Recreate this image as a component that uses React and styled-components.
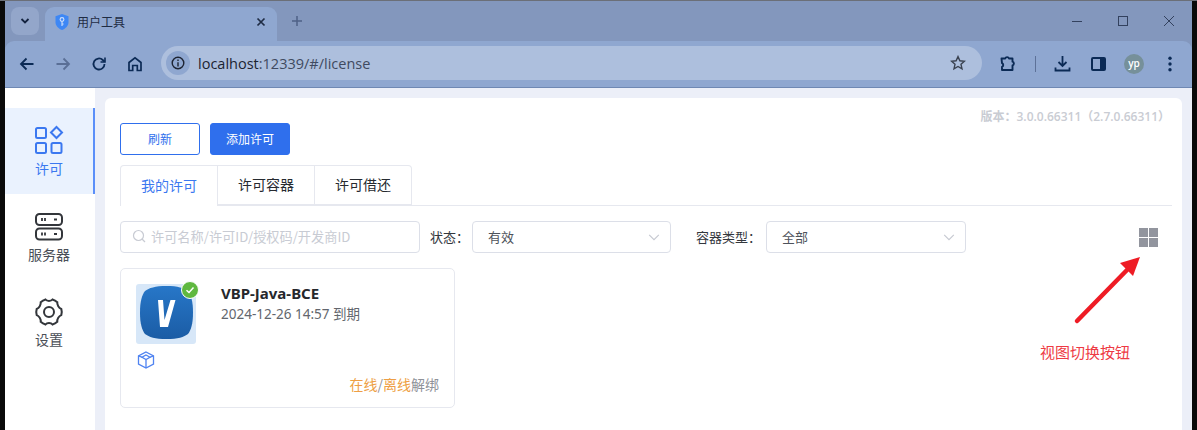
import React from "react";
import styled, { createGlobalStyle } from "styled-components";

const Global = createGlobalStyle`
  html, body { margin: 0; padding: 0; background: #000; }
  * { box-sizing: border-box; }
  body { font-family: "Open Sans", "Noto Sans CJK SC", sans-serif; }
`;

const Frame = styled.div`
  width: 1197px; height: 430px; overflow: hidden; display: flex; flex-direction: column;
  border-top: 1px solid #6b6f78; padding: 0 5px 0 5px; background: #0a0a0a;
`;
const Chrome = styled.div` flex: none; background: #8397bd; `;
const TabStrip = styled.div`
  height: 40px; display: flex; align-items: flex-end; padding-left: 6px; position: relative;
`;
const TabSearch = styled.div`
  width: 28px; height: 28px; margin-bottom: 6px; border-radius: 8px; background: #93a6ca; display: flex; align-items: center; justify-content: center; color: #14233f;
`;
const Tab = styled.div`
  width: 232px; height: 34px; margin-left: 6px; background: #8fa7d0; border-radius: 9px 9px 0 0; display: flex; align-items: center; padding: 0 11px 4px 10px; gap: 8px;
  font-size: 12px; color: #1f2c44; font-family: "Noto Sans CJK SC", sans-serif;
`;
const TabTitle = styled.span` flex: 1; padding-bottom: 2px; `;
const NewTab = styled.div` margin: 0 0 6px 14px; width: 16px; height: 28px; display: flex; align-items: center; color: #4f6187; `;
const WindowButtons = styled.div` margin-left: auto; height: 40px; display: flex; align-self: flex-start; align-items: center; color: #33415e; `;
const WindowButton = styled.div` width: 46px; height: 40px; display: flex; align-items: center; justify-content: center; `;
const ToolBar = styled.div`
  height: 47px; background: #8fa7d0; display: flex; align-items: center; padding-bottom: 1px; border-bottom: 1px solid #6f88b3; border-radius: 9px 9px 0 0;
`;
const NavIcons = styled.div` display: flex; align-items: center; padding-left: 4px; width: 156px; flex: none; `;
const NavIcon = styled.div` width: 36px; height: 34px; display: flex; align-items: center; justify-content: center; color: ${p => (p.$dim ? "#5a6f96" : "#0b2a55")}; `;
const Omnibox = styled.div`
  width: 821px; height: 34px; margin-top: -1px; border-radius: 17px; background: #adbfdd; display: flex; align-items: center; padding: 0 16px 0 5px; font-size: 14.5px; color: #3f4a60; flex: none;
`;
const InfoCircle = styled.div` width: 24px; height: 24px; border-radius: 50%; background: #8fa7d0; display: flex; align-items: center; justify-content: center; margin-right: 8px; color: #1d2433; `;
const Host = styled.span` color: #1c2431; `;
const Url = styled.span` flex: 1; white-space: nowrap; `;
const ToolIcons = styled.div` display: flex; align-items: center; flex: 1; `;
const ToolIcon = styled.div` display: flex; align-items: center; justify-content: center; color: #0b2a55; width: ${p => p.$w || 36}px; height: 34px; flex: none; `;
const Sep = styled.div` width: 1px; height: 16px; background: #5d7198; margin: 0 8px 0 1px; flex: none; `;
const Avatar = styled.div` width: 20px; height: 20px; border-radius: 50%; background: #76909a; color: #fff; font-size: 10px; font-weight: 600; line-height: 18px; text-align: center; `;

const Page = styled.div` flex: 1; display: flex; background: #fff; min-height: 0; `;
const SideBar = styled.div` width: 90px; flex: none; background: #fff; padding-top: 20px; display: flex; flex-direction: column; `;
const SideItem = styled.div`
  height: ${p => p.$h}px; display: flex; flex-direction: column; align-items: center; padding-top: ${p => p.$pt}px; gap: ${p => p.$gap}px; font-size: 14px; line-height: 20px;
  font-family: "Noto Sans CJK SC", sans-serif;
  color: ${p => (p.$active ? "#3b78f0" : "#4a4f57")};
  background: ${p => (p.$active ? "#eaf2fe" : "transparent")};
  border-right: 2px solid ${p => (p.$active ? "#5b8ff9" : "transparent")};
`;
const Main = styled.div` flex: 1; background: #eceff8; padding: 10px 10px 0 10px; min-width: 0; `;
const Card = styled.div` background: #fff; height: 100%; border-radius: 6px 6px 0 0; padding: 0 10px 0 15px; position: relative; font-family: "Noto Sans CJK SC", sans-serif; `;
const Version = styled.div` text-align: right; height: 25px; padding: 9px 2px 0 0; line-height: 20px; font-size: 12px; font-weight: 600; color: #c9ccd3; font-family: "Open Sans", "Noto Sans CJK SC", sans-serif; `;
const Actions = styled.div` display: flex; gap: 10px; height: 32px; `;
const Button = styled.button`
  width: 80px; height: 32px; border-radius: 3px; border: 1px solid #2f6fed; font: inherit; font-size: 12px; padding: 0 0 2px;
  background: ${p => (p.$primary ? "#2f6fed" : "#fff")}; color: ${p => (p.$primary ? "#fff" : "#2f6fed")};
`;
const Tabs = styled.div` display: flex; margin-top: 10px; border-bottom: 1px solid #e6e8ef; height: 41px; `;
const TabItem = styled.div`
  height: ${p => (p.$active ? 41 : 40)}px; width: ${p => p.$w}px; display: flex; align-items: center; justify-content: center; font-size: 14px; background: #fff; padding-bottom: 2px;
  border: 1px solid #e6e8ef; border-left-width: ${p => (p.$first ? 1 : 0)}px; border-bottom-width: ${p => (p.$active ? 0 : 1)}px;
  border-radius: ${p => (p.$first ? "4px 0 0 0" : p.$last ? "0 4px 0 0" : "0")};
  color: ${p => (p.$active ? "#3b78f0" : "#262a30")};
`;
const Filters = styled.div` display: flex; align-items: center; margin-top: 15px; height: 32px; `;
const SearchBox = styled.div`
  width: 300px; height: 32px; border: 1px solid #dcdfe8; border-radius: 4px; display: flex; align-items: center; padding: 0 0 2px 11px; gap: 5px; color: #c8cbd3; font-size: 13.2px; flex: none;
`;
const Label = styled.span` font-size: 13px; color: #33373d; margin-left: ${p => p.$ml}px; width: ${p => p.$w}px; flex: none; white-space: nowrap; padding-bottom: 2px; `;
const Select = styled.div`
  width: ${p => p.$w}px; height: 32px; border: 1px solid #dcdfe8; border-radius: 4px; display: flex; align-items: center; justify-content: space-between; padding: 0 9px 0 15px; font-size: 13px; color: #4e535b; flex: none;
`;
const SelectText = styled.span` padding-bottom: 2px; `;
const ViewSwitch = styled.div` margin-left: auto; margin-right: 14px; width: 19px; height: 19px; display: grid; grid-template-columns: 9px 9px; grid-template-rows: 9px 9px; gap: 1px; `;
const ViewCell = styled.i` display: block; background: #92959e; `;
const LicenseCard = styled.div`
  width: 335px; height: 140px; margin-top: 15px; border: 1px solid #e6e8ef; border-radius: 5px; padding: 15px 15px 0 15px; position: relative;
  display: flex; flex-direction: column;
`;
const CardTop = styled.div` display: flex; gap: 25px; `;
const Logo = styled.div` width: 60px; height: 60px; flex: none; position: relative; border-radius: 3px; background: #d7e7f8; display: flex; justify-content: center; padding: 2px 0 0 1px; `;
const Badge = styled.div` position: absolute; top: -3px; right: -3px; width: 16px; height: 16px; border-radius: 50%; background: #5fb83f; border: 1px solid #fff; display: flex; align-items: center; justify-content: center; box-sizing: content-box; `;
const Name = styled.div` font-size: 15px; line-height: 21px; margin-top: -1px; font-weight: 700; color: #26282c; font-family: "Noto Sans", "Noto Sans CJK SC", sans-serif; `;
const Expire = styled.div` font-size: 13.5px; line-height: 20px; color: #62666d; font-family: "Noto Sans", "Noto Sans CJK SC", sans-serif; `;
const CubeRow = styled.div` height: 18px; margin: 6px 0 0 1px; color: #4f83f1; `;
const LinkRow = styled.div` margin-top: 6px; text-align: right; font-size: 14px; line-height: 20px; color: #8f9299; `;
const Orange = styled.span` color: #ee9f45; `;
const Annotation = styled.div` position: absolute; left: 935px; top: 244px; color: #ee3a44; font-size: 15px; line-height: 20px; white-space: nowrap; `;
const ArrowSvg = styled.svg` position: absolute; left: 960px; top: 150px; `;

const Chevron = ({ c = "#c6c9d1" }) => (
  <svg width="14" height="14" viewBox="0 0 16 16" fill="none" stroke={c} strokeWidth="1.3">
    <path d="M2.5 5.5 8 11l5.5-5.5" />
  </svg>
);

export default function App() {
  return (
    <>
      <Global />
      <Frame>
        <Chrome>
          <TabStrip>
            <TabSearch>
              <svg width="12" height="12" viewBox="0 0 12 12" fill="none" stroke="currentColor" strokeWidth="1.8"><path d="M2.5 4 6 7.5 9.5 4" /></svg>
            </TabSearch>
            <Tab>
              <svg width="14" height="16" viewBox="0 0 14 16">
                <path d="M7 0 13.5 2.2V8c0 3.8-2.8 6.6-6.5 8C3.3 14.6.5 11.8.5 8V2.2Z" fill="#3d87f5" />
                <circle cx="7" cy="5.5" r="1.9" fill="none" stroke="#cfe0fb" strokeWidth="1.1" />
                <path d="M7 7.5V12M7 10h1.6" fill="none" stroke="#cfe0fb" strokeWidth="1.1" />
              </svg>
              <TabTitle>用户工具</TabTitle>
              <svg width="10" height="10" viewBox="0 0 10 10" stroke="#1f2c44" strokeWidth="1.7"><path d="M1.5 1.5l7 7M8.5 1.5l-7 7" /></svg>
            </Tab>
            <NewTab>
              <svg width="12" height="12" viewBox="0 0 12 12" stroke="currentColor" strokeWidth="1.5"><path d="M6 1v10M1 6h10" /></svg>
            </NewTab>
            <WindowButtons>
              <WindowButton>
                <svg width="12" height="12" viewBox="0 0 12 12" stroke="currentColor"><path d="M1 6.5h10" /></svg>
              </WindowButton>
              <WindowButton>
                <svg width="12" height="12" viewBox="0 0 12 12" fill="none" stroke="currentColor"><rect x="1.5" y="1.5" width="9" height="9" /></svg>
              </WindowButton>
              <WindowButton>
                <svg width="12" height="12" viewBox="0 0 12 12" stroke="currentColor"><path d="M1 1l10 10M11 1 1 11" /></svg>
              </WindowButton>
            </WindowButtons>
          </TabStrip>
          <ToolBar>
            <NavIcons>
              <NavIcon>
                <svg width="16" height="16" viewBox="0 0 16 16" fill="none" stroke="currentColor" strokeWidth="1.8"><path d="M14.5 8H2.5M7.5 2.5 2 8l5.5 5.5" /></svg>
              </NavIcon>
              <NavIcon $dim>
                <svg width="16" height="16" viewBox="0 0 16 16" fill="none" stroke="currentColor" strokeWidth="1.8"><path d="M1.5 8h12M8.5 2.5 14 8l-5.5 5.5" /></svg>
              </NavIcon>
              <NavIcon>
                <svg width="16" height="16" viewBox="0 0 16 16" fill="none" stroke="currentColor" strokeWidth="1.8"><path d="M13.5 8A5.5 5.5 0 1 1 11.8 4L13.5 5.5" /><path d="M14 1.5V6H9.5" strokeWidth="1.6" /></svg>
              </NavIcon>
              <NavIcon>
                <svg width="16" height="16" viewBox="0 0 16 16" fill="none" stroke="currentColor" strokeWidth="1.7"><path d="M2 14.5V6.5L8 1.8l6 4.7v8h-3.7V9.5H5.7v5Z" /></svg>
              </NavIcon>
            </NavIcons>
            <Omnibox>
              <InfoCircle>
                <svg width="14" height="14" viewBox="0 0 14 14" fill="none" stroke="currentColor" strokeWidth="1.4"><circle cx="7" cy="7" r="5.8" /><path d="M7 6.2V10.5" /><path d="M7 3.5v1.4" /></svg>
              </InfoCircle>
              <Url><Host>localhost</Host>:12339/#/license</Url>
              <svg width="16" height="16" viewBox="0 0 16 16" fill="none" stroke="#3a4250" strokeWidth="1.4"><path d="M8 1.6l1.9 4.2 4.5.5-3.4 3 1 4.5L8 11.5l-4 2.3 1-4.5-3.4-3 4.5-.5Z" /></svg>
            </Omnibox>
            <ToolIcons>
              <ToolIcon $w={52}>
                <svg width="18" height="18" viewBox="0 0 18 18" fill="none" stroke="currentColor" strokeWidth="1.9"><path d="M2.5 3.5h3.7a2 2 0 0 1 3.8 0h3.5v3.2a2 2 0 0 1 0 3.8v4.5H3v-3.2a2 2 0 0 0 0-3.7Z" strokeLinejoin="round" /></svg>
              </ToolIcon>
              <Sep />
              <ToolIcon>
                <svg width="17" height="17" viewBox="0 0 17 17" fill="none" stroke="currentColor" strokeWidth="1.8"><path d="M8.5 1v9.5M4.5 7l4 4 4-4M1.5 12.500v3h14v-3" /></svg>
              </ToolIcon>
              <ToolIcon>
                <svg width="15" height="14" viewBox="0 0 15 14"><path d="M2 0h11a2 2 0 0 1 2 2v10a2 2 0 0 1-2 2H2a2 2 0 0 1-2-2V2a2 2 0 0 1 2-2Zm0 2v10h7V2Z" fill="currentColor" fillRule="evenodd" /></svg>
              </ToolIcon>
              <ToolIcon><Avatar>yp</Avatar></ToolIcon>
              <ToolIcon>
                <svg width="4" height="16" viewBox="0 0 4 16" fill="currentColor"><circle cx="2" cy="2.2" r="1.7" /><circle cx="2" cy="8" r="1.7" /><circle cx="2" cy="13.8" r="1.7" /></svg>
              </ToolIcon>
            </ToolIcons>
          </ToolBar>
        </Chrome>
        <Page>
          <SideBar>
            <SideItem $active $h={86} $pt={17} $gap={3}>
              <svg width="30" height="30" viewBox="0 0 30 30" fill="none" stroke="#3b78f0" strokeWidth="2">
                <rect x="2" y="3" width="10" height="10" rx="1.5" />
                <rect x="2" y="18" width="10" height="10" rx="1.5" />
                <rect x="17.5" y="18" width="10" height="10" rx="1.5" />
                <path d="M22.5 2 28 7.5 22.5 13 17 7.5Z" />
              </svg>
              许可
            </SideItem>
            <SideItem $h={85} $pt={18} $gap={2}>
              <svg width="30" height="30" viewBox="0 0 30 30" fill="none" stroke="#33363b" strokeWidth="2">
                <rect x="2" y="2" width="26" height="11" rx="3.5" />
                <rect x="2" y="16.5" width="26" height="11" rx="3.5" />
                <path d="M8 6v3M11 6v3M8 20.5v3M11 20.5v3" strokeWidth="1.8" />
                <path d="M20 7.5h3M20 22h3" strokeWidth="2" />
              </svg>
              服务器
            </SideItem>
            <SideItem $h={86} $pt={18} $gap={2}>
              <svg width="30" height="30" viewBox="0 0 30 30" fill="none" stroke="#33363b" strokeWidth="2">
                <path d="M11.5 2.5c1.5 1.9 5.5 1.900 7 0 1.800.5 3.400 1.400 4.800 2.700-.4 2.500 1.600 5.800 4 6.700.6 2 .6 4.200 0 6.200-2.400.9-4.400 4.200-4 6.700-1.400 1.300-3 2.200-4.800 2.700-1.500-1.900-5.500-1.900-7 0-1.800-.5-3.400-1.400-4.800-2.700.4-2.500-1.600-5.800-4-6.700-.6-2-.6-4.200 0-6.200 2.400-.9 4.400-4.200 4-6.700 1.400-1.300 3-2.200 4.800-2.700Z" />
                <circle cx="15" cy="15" r="5" />
              </svg>
              设置
            </SideItem>
          </SideBar>
          <Main>
            <Card>
              <Version>版本：3.0.0.66311（2.7.0.66311）</Version>
              <Actions>
                <Button>刷新</Button>
                <Button $primary>添加许可</Button>
              </Actions>
              <Tabs>
                <TabItem $first $active $w={98}>我的许可</TabItem>
                <TabItem $w={97}>许可容器</TabItem>
                <TabItem $last $w={97}>许可借还</TabItem>
              </Tabs>
              <Filters>
                <SearchBox>
                  <svg width="14" height="14" viewBox="0 0 14 14" fill="none" stroke="#c8cbd3" strokeWidth="1.2"><circle cx="6.5" cy="6.5" r="5" /><path d="M10 10l3 3" /></svg>
                  许可名称/许可ID/授权码/开发商ID
                </SearchBox>
                <Label $ml={10} $w={42}>状态：</Label>
                <Select $w={199}><SelectText>有效</SelectText><Chevron /></Select>
                <Label $ml={25} $w={70}>容器类型：</Label>
                <Select $w={200}><SelectText>全部</SelectText><Chevron /></Select>
                <ViewSwitch>
                  <ViewCell /><ViewCell /><ViewCell /><ViewCell />
                </ViewSwitch>
              </Filters>
              <LicenseCard>
                <CardTop>
                  <Logo>
                    <svg width="53" height="53" viewBox="0 0 53 53">
                      <defs>
                        <linearGradient id="vg" x1="0" y1="0" x2="0" y2="1">
                          <stop offset="0" stopColor="#2777c8" />
                          <stop offset="1" stopColor="#1b5ca5" />
                        </linearGradient>
                      </defs>
                      <path d="M26.5 0C38 0 44 2 48 5C51 9 53 15 53 26.5C53 38 51 44 48 48C44 51 38 53 26.5 53C15 53 9 51 5 48C2 44 0 38 0 26.5C0 15 2 9 5 5C9 2 15 0 26.5 0Z" fill="url(#vg)" />
                      <path d="M18 14h5l1.500 20L30.500 14h5L28 41h-8Z" fill="#fff" />
                    </svg>
                    <Badge>
                      <svg width="10" height="10" viewBox="0 0 10 10" fill="none" stroke="#fff" strokeWidth="1.5"><path d="M1.5 5.2 4 7.5l4.500-5" /></svg>
                    </Badge>
                  </Logo>
                  <div>
                    <Name>VBP-Java-BCE</Name>
                    <Expire>2024-12-26 14:57 到期</Expire>
                  </div>
                </CardTop>
                <CubeRow>
                  <svg width="18" height="18" viewBox="0 0 18 18" fill="none" stroke="currentColor" strokeWidth="1.3">
                    <path d="M9 1 16.5 5v8L9 17 1.5 13V5Z" />
                    <path d="M9 4 13 6.2 9 8.5 5 6.2Z" />
                    <path d="M1.5 5 5 6.2M16.5 5 13 6.2M9 8.5V17" />
                  </svg>
                </CubeRow>
                <LinkRow><Orange>在线</Orange>/<Orange>离线</Orange>解绑</LinkRow>
              </LicenseCard>
              <ArrowSvg width="90" height="80" viewBox="0 0 90 80">
                <path d="M12 73 62 22" stroke="#ee1c25" strokeWidth="4.5" strokeLinecap="round" fill="none" />
                <path d="M75 9 55 15 68 28Z" fill="#ee1c25" />
              </ArrowSvg>
              <Annotation>视图切换按钮</Annotation>
            </Card>
          </Main>
        </Page>
      </Frame>
    </>
  );
}
